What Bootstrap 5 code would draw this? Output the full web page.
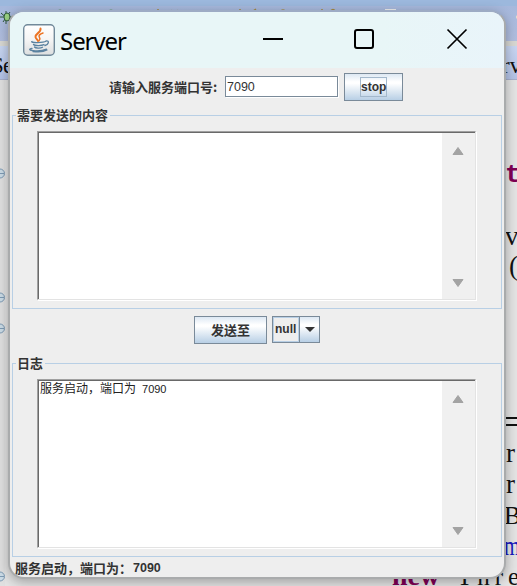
<!DOCTYPE html>
<html lang="zh-CN">
<head>
<meta charset="utf-8">
<meta name="viewport" content="width=device-width, initial-scale=1">
<title>Server</title>
<link href="https://cdn.jsdelivr.net/npm/bootstrap@5.3.0/dist/css/bootstrap.min.css" rel="stylesheet">
<style>
  body { width: 517px; height: 586px; background: #dcdcdc; font-family: "Liberation Sans", "Noto Sans CJK SC", sans-serif; font-size: 12px; line-height: 16px; color: #333; }
  .editor { left: 0; top: 0; z-index: 0; }
  .app-window { z-index: 1; width: 498px; height: 569px; margin: 10px 0 0 8px; border: 2px solid #a9abac; border-top-color: #9dabc4; border-radius: 16px; background: #eee; box-shadow: 0 3px 12px rgba(0,0,0,.3); }
  .title-strip { height: 56px; background: linear-gradient(90deg, #e8f6f7 75%, #e9f4fa); padding-left: 13px; }
  .title-text { font: 24px/32px "Noto Sans", "Open Sans", sans-serif; color: #000; margin: 1px 0 0 5px; letter-spacing: -1.050px; }
  .cjk { font-family: "Noto Sans CJK SC", sans-serif; font-size: 13px; font-weight: 700; line-height: 16px; }
  .port-row { height: 39px; padding: 5px 0 0 99px; }
  .port-label { width: 115px; padding-top: 6px; }
  .port-field { width: 113px; height: 21px; margin: 3px 0 0 1px; border: 1px solid #7a8a99; border-radius: 0; padding: 0 1px; background: #fff; box-shadow: 1px 1px #fff; font-size: 12.500px; line-height: 19px; color: #333; outline: 0; }
  .metal { border: 1px solid #7a8a99; border-radius: 0; padding: 0; color: #333; font-size: 12px; font-weight: 700; line-height: 16px; background: linear-gradient(#dde8f3 0, #fff 30%, #fff 36%, #b8cfe5 100%); }
  .stop-btn { width: 59px; height: 28px; margin-left: 6px; }
  .focus-box { border: 1px solid #a3b8cc; height: 20px; line-height: 18px; width: 27px; }
  .send-btn { width: 73px; height: 28px; font-size: 13px; }
  .titled { width: 490px; height: 202px; margin-left: 2px; }
  .titled-line { left: 0; right: 0; top: 8px; bottom: 0; border: 1px solid #b8cfe5; }
  .titled-caption { left: 4px; top: 0; height: 17px; background: #eee; padding: 0 2px 0 1px; white-space: nowrap; }
  .text-pane { width: 439px; height: 169px; margin: 24px 0 0 25px; border: 1px solid #a0a0a0; border-right-color: #e3e3e3; border-bottom-color: #e3e3e3; box-shadow: inset 1px 1px #696969, 1px 1px #fff; background: #fff; padding: 1px 0 0 1px; }
  .scroll-strip { width: 33px; background: #f0f0f0; padding: 13px 1px 11px 0; }
  .log-text { font: 12px/15px "Noto Sans CJK SC", sans-serif; color: #222; white-space: pre; margin-top: -1px; padding-left: 1px; }
  .log-num { font: 11px/15px "Liberation Sans", sans-serif; margin-left: 6px; }
  .send-row { height: 46px; padding: 7px 0 0 184px; }
  .combo { width: 48px; height: 27px; margin-left: 5px; border: 1px solid #7a8a99; }
  .combo-value { width: 27px; border: 1px solid #b8cfe5; font-weight: 700; line-height: 23px; padding-left: 1px; }
  .combo-arrow { width: 20px; border-width: 0 0 0 1px; }
  .status-line { padding: 3px 0 0 5px; }
  .status-num { font-size: 12.500px; margin-left: 1px; }
</style>
<script src="https://cdn.jsdelivr.net/npm/bootstrap@5.3.0/dist/js/bootstrap.bundle.min.js"></script>
</head>
<body class="m-0 overflow-hidden position-relative d-flex align-items-start">

<svg class="editor position-absolute" width="517" height="586" aria-hidden="true">
  <defs>
    <linearGradient id="tabBg" x1="0" y1="0" x2="0" y2="1"><stop offset="0" stop-color="#c8d6f2"/><stop offset="1" stop-color="#b3c2e6"/></linearGradient>
    <linearGradient id="toolBg" x1="0" y1="0" x2="0" y2="1"><stop offset="0" stop-color="#a6b8dc"/><stop offset="1" stop-color="#b1bedf"/></linearGradient>
  </defs>
  <rect width="517" height="586" fill="#e4e4e4"/>
  <rect width="517" height="6" fill="#9cb8dd"/>
  <rect y="6" width="517" height="35" fill="url(#toolBg)"/>
  <rect y="41" width="517" height="5" fill="#d8d8d3"/>
  <rect y="46" width="517" height="33" fill="url(#tabBg)"/>
  <rect y="79" width="517" height="1" fill="#a7b0cc"/>
  <rect x="0" y="80" width="5" height="506" fill="#e0e0e0"/>
  <g stroke="#30583c" stroke-width="1"><path d="M1 13l10 9M10 12l-7 10M0 17h12M6 11v13"/><ellipse cx="7" cy="17" rx="3" ry="4" fill="#9cd483"/></g>
  <g fill="none" stroke="#5d9a60" stroke-width="2"><path d="M55 13q5-5 10 0M106 13q5-5 10 0"/></g>
  <g fill="none" stroke="#a48a44" stroke-width="1.5"><path d="M158 9v3M171 12l1-2M177 12l1-2M193 11h8M240 9v3M253 11l3-2M280 12q3-4 6 0M322 9v3M330 12q3-5 6 0M466 11h3"/></g>
  <path d="M385 9h11v4h-11z" fill="#eee"/><path d="M387 10h5v3h-5z" fill="#506a88"/>
  <circle cx="518" cy="17" r="2" fill="#e9dfcc"/>
  <g fill="#cbdbe6" stroke="#7d9ab3"><circle cx="0" cy="173.500" r="4.500"/><path d="M0 173.500h4"/><circle cx="0" cy="297.500" r="4.500"/><path d="M0 297.500h4"/><circle cx="0" cy="328.500" r="4.500"/><path d="M0 328.500h4"/><circle cx="0" cy="576.500" r="4.500"/><path d="M0 576.500h4"/></g>
  <g font-family="Liberation Serif, serif" font-size="23" fill="#111"><text x="-9" y="73">S</text><text x="3" y="73">e</text><text x="502" y="73">rv</text></g>
  <g font-family="Liberation Serif, serif" font-size="27" fill="#111">
    <text x="505" y="182" fill="#7f0055" font-family="Liberation Mono, monospace" font-size="26" font-weight="700">t</text>
    <text x="505" y="245">v</text><text x="509" y="275">(</text>
    <text x="504" y="431" font-family="Liberation Mono, monospace">=</text><text x="506" y="462">r</text><text x="506" y="493">r</text><text x="504" y="524" font-size="25">B</text>
    <text x="504" y="555" fill="#1717bd" textLength="16" lengthAdjust="spacingAndGlyphs">m</text>
    <text x="392" y="585" fill="#7f0055" font-weight="700" textLength="48" lengthAdjust="spacingAndGlyphs">new</text><text x="457" y="585" font-size="25" textLength="62">Thre</text>
  </g>
</svg>

<main class="app-window position-relative overflow-hidden flex-shrink-0">
  <header class="title-strip d-flex align-items-center">
    <svg class="flex-shrink-0" width="32" height="32" viewBox="0 0 32 32" aria-hidden="true">
      <defs><linearGradient id="cupBg" x1="0" y1="0" x2="0" y2="1"><stop offset="0" stop-color="#fff"/><stop offset=".5" stop-color="#f4f4f4"/><stop offset="1" stop-color="#dcdedf"/></linearGradient></defs>
      <rect x=".7" y=".7" width="30.600" height="30.600" rx="4" fill="url(#cupBg)" stroke="#71899a" stroke-width="1.400"/>
      <g fill="none" stroke="#ec7424" stroke-linecap="round"><path d="M17.500 4.500c1 4-5.500 5-5 8.500.2 1.700 2 2.300 2.500 4" stroke-width="2"/><path d="M20 9c-3 1-5 2.500-3.500 4.500 1 1.300.6 2-.5 3.200" stroke-width="1.500"/></g>
      <g fill="none" stroke="#5b82a0" stroke-width="1.300" stroke-linecap="round"><path d="M9 17.500c-3 1.200 11 1.700 14-.2M10.500 20.500c1 1.300 8 1.400 10.500.2M11.500 23c1 1.300 6 1.400 8 .3M23 17c4-.6 2.500 3.800-1 4.500M9 24.500c-8 1.700 7 4 14.500.7M10 27.500c5 .7 11 .2 14-1.500"/></g>
    </svg>
    <span class="title-text">Server</span>
    <svg class="ms-auto me-4 flex-shrink-0" width="220" height="24" viewBox="0 0 220 24" fill="none" stroke="#000" stroke-width="2" aria-hidden="true">
      <path d="M3 11h20"/><rect x="95" y="2" width="18" height="18" rx="2"/><path d="M187.500 1.500l19 19M206.500 1.500l-19 19" stroke-width="1.700"/>
    </svg>
  </header>

  <div class="port-row d-flex align-items-start">
    <label class="port-label cjk" for="port">请输入服务端口号:</label>
    <input class="port-field" id="port" type="text" value="7090">
    <button class="metal stop-btn btn d-flex align-items-center justify-content-center" type="button"><span class="focus-box">stop</span></button>
  </div>

  <section class="titled position-relative d-flex">
    <div class="titled-line position-absolute"></div>
    <div class="titled-caption cjk position-absolute">需要发送的内容</div>
    <div class="text-pane d-flex position-relative">
      <div class="flex-grow-1"></div>
      <div class="scroll-strip d-flex flex-column justify-content-between align-items-center">
        <svg width="12" height="10" viewBox="0 0 12 10"><path d="M6 1.500L11 8.500H1z" fill="#a3a3a3" stroke="#a3a3a3" stroke-linejoin="round"/></svg>
        <svg width="12" height="10" viewBox="0 0 12 10"><path d="M6 8.500L11 1.500H1z" fill="#a3a3a3" stroke="#a3a3a3" stroke-linejoin="round"/></svg>
      </div>
    </div>
  </section>

  <div class="send-row d-flex align-items-start">
    <button class="metal send-btn btn cjk" type="button">发送至</button>
    <div class="combo d-flex">
      <div class="combo-value">null</div>
      <div class="metal combo-arrow d-flex align-items-center justify-content-center"><svg width="10" height="5" viewBox="0 0 10 5"><path d="M0 0h10L5 5z" fill="#333"/></svg></div>
    </div>
  </div>

  <section class="titled position-relative d-flex">
    <div class="titled-line position-absolute"></div>
    <div class="titled-caption cjk position-absolute">日志</div>
    <div class="text-pane d-flex position-relative">
      <div class="log-text flex-grow-1">服务启动，端口为<span class="log-num">7090</span></div>
      <div class="scroll-strip d-flex flex-column justify-content-between align-items-center">
        <svg width="12" height="10" viewBox="0 0 12 10"><path d="M6 1.500L11 8.500H1z" fill="#a3a3a3" stroke="#a3a3a3" stroke-linejoin="round"/></svg>
        <svg width="12" height="10" viewBox="0 0 12 10"><path d="M6 8.500L11 1.500H1z" fill="#a3a3a3" stroke="#a3a3a3" stroke-linejoin="round"/></svg>
      </div>
    </div>
  </section>

  <footer class="status-line d-flex"><span class="cjk">服务启动，端口为：</span><b class="status-num">7090</b></footer>
</main>
</body>
</html>
